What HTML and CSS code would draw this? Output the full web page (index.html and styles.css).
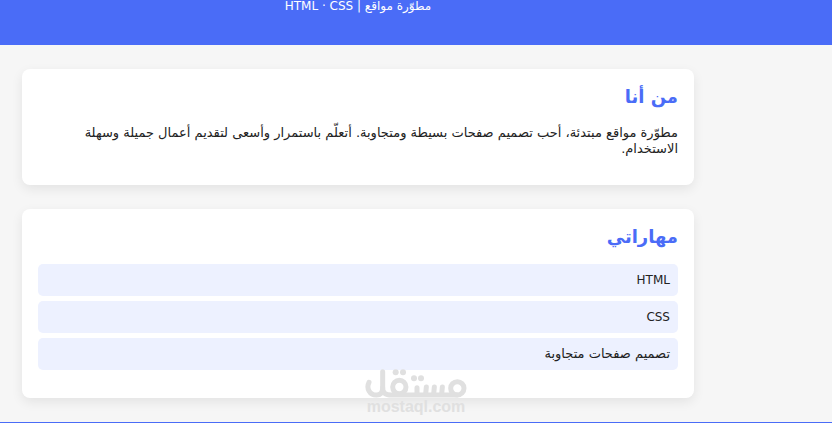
FILE: index.html
```
<!DOCTYPE html>
<html lang="ar" dir="rtl">
<head>
<meta charset="UTF-8">
<meta name="viewport" content="width=device-width, initial-scale=1.0">
<title>مطوّرة مواقع</title>
<link rel="stylesheet" href="styles.css">
</head>
<body>
<header>
    <p>مطوّرة مواقع | HTML · CSS</p>
</header>

<main>
    <section class="card">
        <h2>من أنا</h2>
        <p>مطوّرة مواقع مبتدئة، أحب تصميم صفحات بسيطة ومتجاوبة. أتعلّم باستمرار وأسعى لتقديم أعمال جميلة وسهلة الاستخدام.</p>
    </section>

    <section class="card">
        <h2>مهاراتي</h2>
        <ul class="skills">
            <li lang="en">HTML</li>
            <li lang="en">CSS</li>
            <li>تصميم صفحات متجاوبة</li>
        </ul>
    </section>
</main>

<footer></footer>

<div class="watermark" dir="ltr">
    <svg viewBox="0 0 306 90" aria-hidden="true">
        <g fill="none" stroke="currentColor" stroke-width="15" stroke-linecap="round" stroke-linejoin="round">
            <path d="M12 40C3 58 14 78 34 78C48 78 53 70 53 56V8"/>
            <path d="M53 56C53 73 62 78 80 78H276"/>
            <circle cx="103" cy="54" r="20"/>
            <circle cx="277" cy="58" r="20"/>
            <path d="M156 76V56M182 76L184 54M206 76L208 54M230 76L232 54"/>
        </g>
        <g fill="currentColor">
            <circle cx="92" cy="10" r="9"/>
            <circle cx="114" cy="10" r="9"/>
            <circle cx="147" cy="28" r="9"/>
            <circle cx="168" cy="28" r="9"/>
        </g>
    </svg>
    <span>mostaql.com</span>
</div>
</body>
</html>
```
FILE: styles.css
```
* {
    box-sizing: border-box;
}

body {
    margin: 0;
    background: #f6f6f6;
    color: #222;
    font-family: "DejaVu Sans", Tahoma, sans-serif;
    font-size: 13px;
    line-height: 16px;
}

header {
    background: #4a6cf7;
    color: white;
    font-size: 12px;
    text-align: center;
    margin-top: -2px;
    padding: 0 116px 31px 0;
}

header p {
    margin: 0;
}

main {
    padding: 24px 138px 24px 22px;
}

.card {
    background: white;
    padding: 16px;
    margin-bottom: 24px;
    border-radius: 8px;
    box-shadow: 0 4px 12px rgba(0, 0, 0, 0.08);
}

.card:last-child {
    margin-bottom: 0;
}

.card h2 {
    margin: 0 0 15px;
    color: #4a6cf7;
    font-size: 18px;
    line-height: 24px;
}

.card p {
    margin: 16px 0 12px;
}

.skills {
    list-style: none;
    margin: 0 0 12px;
    padding: 0;
    display: grid;
    gap: 5px;
}

.skills li {
    background: #edf1ff;
    padding: 8px;
    border-radius: 5px;
}

.skills li:lang(en) {
    font-size: 12px;
}

footer {
    background: #4a6cf7;
    height: 1px;
}

.watermark {
    position: absolute;
    left: 365px;
    top: 369px;
    width: 102px;
    color: #e0e0e0;
    font: bold 16px/16px "Liberation Sans", sans-serif;
    text-align: center;
}

.watermark svg {
    display: block;
    width: 102px;
}
```
